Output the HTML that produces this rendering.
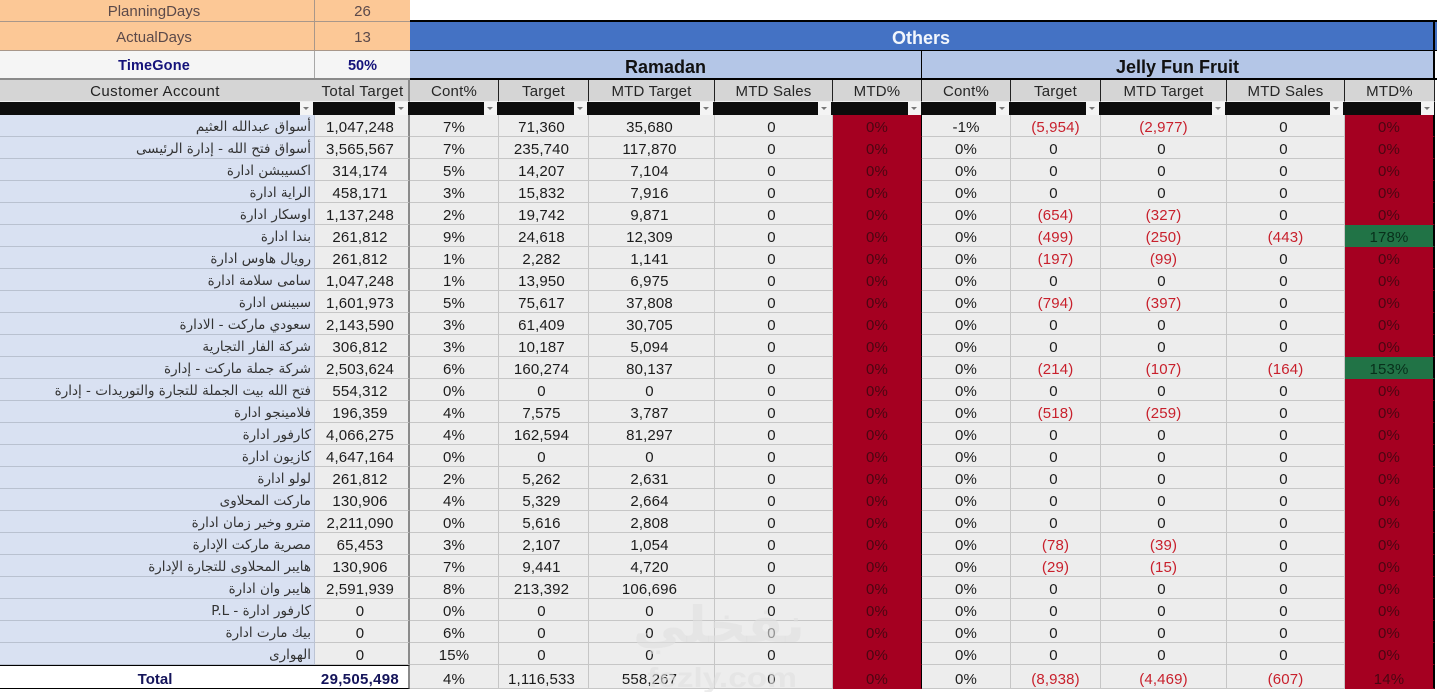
<!DOCTYPE html>
<html lang="en"><head><meta charset="utf-8"><title>Sales Report</title>
<style>
*{box-sizing:border-box}
html,body{margin:0;padding:0;width:1437px;height:692px;overflow:hidden;background:#fff}
body{position:relative;font-family:"Liberation Sans","DejaVu Sans",sans-serif;font-size:15px;color:#1c1c1c}
.a{position:absolute;text-align:center;white-space:nowrap}
table{position:absolute;left:0;top:80px;width:1435px;table-layout:fixed;border-collapse:separate;border-spacing:0}
td{padding:0;text-align:center;white-space:nowrap;overflow:hidden}
tr.h td{height:22px;background:#d5d5d5;border-right:1px solid #222;border-bottom:1px solid #eee;padding-top:2px;line-height:19px;color:#262626;letter-spacing:.2px}
tr.h td:nth-child(1){border-right:0;color:#222;padding-right:5px;letter-spacing:.45px}
tr.h td:nth-child(2){border-right:2px solid #8a8a8a;padding-left:2px;letter-spacing:.4px}
tr.f td{height:13px;background:#0c0c0c;position:relative;line-height:0}
tr.f span{position:absolute;right:2px;top:0;width:13px;height:13px;background:#f4f4f4}
tr.f td:nth-child(7) span,tr.f td:nth-child(12) span{right:1px}
tr.f span:after{content:"";position:absolute;left:3px;top:5px;border:3px solid transparent;border-top:3px solid #777;border-bottom:0}
tr.b td{height:22px;background:#ededed;border-right:1px solid #c6c6c6;border-bottom:1px solid #c6c6c6;padding-top:5px;line-height:16px;letter-spacing:.15px}
tr.b td:nth-child(1){background:#d9e1f2;border-right:1px solid #bcc4d4;border-bottom-color:#b9c1d0;text-align:right;font-family:"DejaVu Sans",sans-serif;font-size:13.5px;letter-spacing:0;color:#333;direction:rtl;padding:3px 0 0}
tr.b td:nth-child(1) i{font-style:normal;display:block;padding-right:3px;text-align:right;direction:rtl;line-height:18px}
tr.b td:nth-child(2){border-right:2px solid #8a8a8a;padding-right:3px}
tr.b td:nth-child(4),tr.b td:nth-child(5),tr.b td:nth-child(6),tr.b td:nth-child(9),tr.b td:nth-child(10),tr.b td:nth-child(11){padding-right:4px}
tr.b td.n{color:#c8202c;padding-right:0}
tr.b td:nth-child(7),tr.b td:nth-child(12){background:#a50021;color:#4a0612;border-bottom-color:#a50021;border-right:1px solid #000}
tr.b td:nth-child(12){border-right:2px solid #000}
tr.b td.g{background:#217346;color:#08301b;border-bottom-color:#217346}
tr.b.t td{height:24px;padding-top:5px;line-height:17px}
tr.b.t td:nth-child(1),tr.b.t td:nth-child(2){background:#fff;border-top:1px solid #000;border-bottom:1px solid #000;font-family:"Liberation Sans",sans-serif;font-weight:bold;color:#14145a;font-size:15px;text-align:center;direction:ltr;border-right:0;padding:5px 5px 0 0}
tr.b.t td:nth-child(2){text-align:right;padding:5px 9px 0 0;border-right:2px solid #8a8a8a;letter-spacing:.3px}
</style></head><body>

<!-- top left block -->
<div class="a" style="left:0;top:0;width:314px;height:22px;background:#fcc896;border-bottom:1px solid #a8978a;line-height:24px;color:#5c4a4a;padding-right:6px">PlanningDays</div>
<div class="a" style="left:314px;top:0;width:96px;height:22px;background:#fcc896;border-bottom:1px solid #a8978a;border-left:1px solid #a8978a;line-height:24px;color:#5c4a4a">26</div>
<div class="a" style="left:0;top:22px;width:314px;height:29px;background:#fcc896;border-bottom:1px solid #a8978a;line-height:32px;color:#5c4a4a;padding-right:6px">ActualDays</div>
<div class="a" style="left:314px;top:22px;width:96px;height:29px;background:#fcc896;border-bottom:1px solid #a8978a;border-left:1px solid #a8978a;line-height:32px;color:#5c4a4a">13</div>
<div class="a" style="left:0;top:51px;width:314px;height:28px;background:#f5f5f5;line-height:31px;font-weight:bold;color:#14127a;font-size:14.5px;padding-right:6px;letter-spacing:.15px">TimeGone</div>
<div class="a" style="left:314px;top:51px;width:96px;height:28px;background:#f5f5f5;border-left:1px solid #a8a8a8;line-height:31px;font-weight:bold;color:#14127a;font-size:14.5px">50%</div>
<div class="a" style="left:0;top:78px;width:410px;height:2px;background:#8a8a8a"></div>

<!-- top right band -->
<div class="a" style="left:410px;top:20px;width:1027px;height:2px;background:#000"></div>
<div class="a" style="left:410px;top:22px;width:1023px;height:28px;background:#4472c4;color:#f2f6fc;font-weight:bold;font-size:18px;line-height:32px;padding-right:1px">Others</div>
<div class="a" style="left:1433px;top:22px;width:2px;height:58px;background:#000"></div>
<div class="a" style="left:1435px;top:22px;width:2px;height:28px;background:#4472c4"></div>
<div class="a" style="left:410px;top:50px;width:1027px;height:1px;background:#000"></div>
<div class="a" style="left:410px;top:51px;width:511px;height:27px;background:#b4c6e7;color:#111;font-weight:bold;font-size:18px;line-height:33px">Ramadan</div>
<div class="a" style="left:921px;top:51px;width:1px;height:27px;background:#000"></div>
<div class="a" style="left:922px;top:51px;width:511px;height:27px;background:#b4c6e7;color:#111;font-weight:bold;font-size:18px;line-height:33px">Jelly Fun Fruit</div>
<div class="a" style="left:410px;top:78px;width:1027px;height:2px;background:#000"></div>

<table>
<colgroup><col style="width:315px"><col style="width:95px"><col style="width:89px"><col style="width:90px"><col style="width:126px"><col style="width:118px"><col style="width:89px"><col style="width:89px"><col style="width:90px"><col style="width:126px"><col style="width:118px"><col style="width:90px"></colgroup>
<tr class="h"><td>Customer Account</td><td>Total Target</td><td>Cont%</td><td>Target</td><td>MTD Target</td><td>MTD Sales</td><td>MTD%</td><td>Cont%</td><td>Target</td><td>MTD Target</td><td>MTD Sales</td><td>MTD%</td></tr>
<tr class="f"><td><span></span></td><td><span></span></td><td><span></span></td><td><span></span></td><td><span></span></td><td><span></span></td><td><span></span></td><td><span></span></td><td><span></span></td><td><span></span></td><td><span></span></td><td><span></span></td></tr>
<tr class="b"><td><i>أسواق عبدالله العثيم</i></td><td>1,047,248</td><td>7%</td><td>71,360</td><td>35,680</td><td>0</td><td>0%</td><td>-1%</td><td class="n">(5,954)</td><td class="n">(2,977)</td><td>0</td><td>0%</td></tr>
<tr class="b"><td><i>أسواق فتح الله - إدارة الرئيسى</i></td><td>3,565,567</td><td>7%</td><td>235,740</td><td>117,870</td><td>0</td><td>0%</td><td>0%</td><td>0</td><td>0</td><td>0</td><td>0%</td></tr>
<tr class="b"><td><i>اكسيبشن ادارة</i></td><td>314,174</td><td>5%</td><td>14,207</td><td>7,104</td><td>0</td><td>0%</td><td>0%</td><td>0</td><td>0</td><td>0</td><td>0%</td></tr>
<tr class="b"><td><i>الراية ادارة</i></td><td>458,171</td><td>3%</td><td>15,832</td><td>7,916</td><td>0</td><td>0%</td><td>0%</td><td>0</td><td>0</td><td>0</td><td>0%</td></tr>
<tr class="b"><td><i>اوسكار ادارة</i></td><td>1,137,248</td><td>2%</td><td>19,742</td><td>9,871</td><td>0</td><td>0%</td><td>0%</td><td class="n">(654)</td><td class="n">(327)</td><td>0</td><td>0%</td></tr>
<tr class="b"><td><i>بندا ادارة</i></td><td>261,812</td><td>9%</td><td>24,618</td><td>12,309</td><td>0</td><td>0%</td><td>0%</td><td class="n">(499)</td><td class="n">(250)</td><td class="n">(443)</td><td class="g">178%</td></tr>
<tr class="b"><td><i>رويال هاوس ادارة</i></td><td>261,812</td><td>1%</td><td>2,282</td><td>1,141</td><td>0</td><td>0%</td><td>0%</td><td class="n">(197)</td><td class="n">(99)</td><td>0</td><td>0%</td></tr>
<tr class="b"><td><i>سامى سلامة ادارة</i></td><td>1,047,248</td><td>1%</td><td>13,950</td><td>6,975</td><td>0</td><td>0%</td><td>0%</td><td>0</td><td>0</td><td>0</td><td>0%</td></tr>
<tr class="b"><td><i>سبينس ادارة</i></td><td>1,601,973</td><td>5%</td><td>75,617</td><td>37,808</td><td>0</td><td>0%</td><td>0%</td><td class="n">(794)</td><td class="n">(397)</td><td>0</td><td>0%</td></tr>
<tr class="b"><td><i>سعودي ماركت - الادارة</i></td><td>2,143,590</td><td>3%</td><td>61,409</td><td>30,705</td><td>0</td><td>0%</td><td>0%</td><td>0</td><td>0</td><td>0</td><td>0%</td></tr>
<tr class="b"><td><i>شركة الفار التجارية</i></td><td>306,812</td><td>3%</td><td>10,187</td><td>5,094</td><td>0</td><td>0%</td><td>0%</td><td>0</td><td>0</td><td>0</td><td>0%</td></tr>
<tr class="b"><td><i>شركة جملة ماركت - إدارة</i></td><td>2,503,624</td><td>6%</td><td>160,274</td><td>80,137</td><td>0</td><td>0%</td><td>0%</td><td class="n">(214)</td><td class="n">(107)</td><td class="n">(164)</td><td class="g">153%</td></tr>
<tr class="b"><td><i>فتح الله بيت الجملة للتجارة والتوريدات - إدارة</i></td><td>554,312</td><td>0%</td><td>0</td><td>0</td><td>0</td><td>0%</td><td>0%</td><td>0</td><td>0</td><td>0</td><td>0%</td></tr>
<tr class="b"><td><i>فلامينجو ادارة</i></td><td>196,359</td><td>4%</td><td>7,575</td><td>3,787</td><td>0</td><td>0%</td><td>0%</td><td class="n">(518)</td><td class="n">(259)</td><td>0</td><td>0%</td></tr>
<tr class="b"><td><i>كارفور ادارة</i></td><td>4,066,275</td><td>4%</td><td>162,594</td><td>81,297</td><td>0</td><td>0%</td><td>0%</td><td>0</td><td>0</td><td>0</td><td>0%</td></tr>
<tr class="b"><td><i>كازيون ادارة</i></td><td>4,647,164</td><td>0%</td><td>0</td><td>0</td><td>0</td><td>0%</td><td>0%</td><td>0</td><td>0</td><td>0</td><td>0%</td></tr>
<tr class="b"><td><i>لولو ادارة</i></td><td>261,812</td><td>2%</td><td>5,262</td><td>2,631</td><td>0</td><td>0%</td><td>0%</td><td>0</td><td>0</td><td>0</td><td>0%</td></tr>
<tr class="b"><td><i>ماركت المحلاوى</i></td><td>130,906</td><td>4%</td><td>5,329</td><td>2,664</td><td>0</td><td>0%</td><td>0%</td><td>0</td><td>0</td><td>0</td><td>0%</td></tr>
<tr class="b"><td><i>مترو وخير زمان ادارة</i></td><td>2,211,090</td><td>0%</td><td>5,616</td><td>2,808</td><td>0</td><td>0%</td><td>0%</td><td>0</td><td>0</td><td>0</td><td>0%</td></tr>
<tr class="b"><td><i>مصرية ماركت الإدارة</i></td><td>65,453</td><td>3%</td><td>2,107</td><td>1,054</td><td>0</td><td>0%</td><td>0%</td><td class="n">(78)</td><td class="n">(39)</td><td>0</td><td>0%</td></tr>
<tr class="b"><td><i>هايبر المحلاوى للتجارة الإدارة</i></td><td>130,906</td><td>7%</td><td>9,441</td><td>4,720</td><td>0</td><td>0%</td><td>0%</td><td class="n">(29)</td><td class="n">(15)</td><td>0</td><td>0%</td></tr>
<tr class="b"><td><i>هايبر وان ادارة</i></td><td>2,591,939</td><td>8%</td><td>213,392</td><td>106,696</td><td>0</td><td>0%</td><td>0%</td><td>0</td><td>0</td><td>0</td><td>0%</td></tr>
<tr class="b"><td><i>كارفور ادارة - P.L</i></td><td>0</td><td>0%</td><td>0</td><td>0</td><td>0</td><td>0%</td><td>0%</td><td>0</td><td>0</td><td>0</td><td>0%</td></tr>
<tr class="b"><td><i>بيك مارت ادارة</i></td><td>0</td><td>6%</td><td>0</td><td>0</td><td>0</td><td>0%</td><td>0%</td><td>0</td><td>0</td><td>0</td><td>0%</td></tr>
<tr class="b"><td><i>الهوارى</i></td><td>0</td><td>15%</td><td>0</td><td>0</td><td>0</td><td>0%</td><td>0%</td><td>0</td><td>0</td><td>0</td><td>0%</td></tr>
<tr class="b t"><td>Total</td><td>29,505,498</td><td>4%</td><td>1,116,533</td><td>558,267</td><td>0</td><td>0%</td><td>0%</td><td class="n">(8,938)</td><td class="n">(4,469)</td><td class="n">(607)</td><td>14%</td></tr>
</table>

<!-- watermark -->
<svg style="position:absolute;left:620px;top:590px" width="200" height="102" viewBox="0 0 200 102">
<text x="13" y="52" textLength="172" lengthAdjust="spacingAndGlyphs" font-family="DejaVu Sans,sans-serif" font-weight="bold" font-size="50" fill="#e0e0e0" fill-opacity=".6">نفخلي</text>
<text x="27" y="97" textLength="150" lengthAdjust="spacingAndGlyphs" font-family="Liberation Sans,sans-serif" font-weight="bold" font-size="28" fill="#e0e0e0" fill-opacity=".6">fezly.com</text>
</svg>
</body></html>
